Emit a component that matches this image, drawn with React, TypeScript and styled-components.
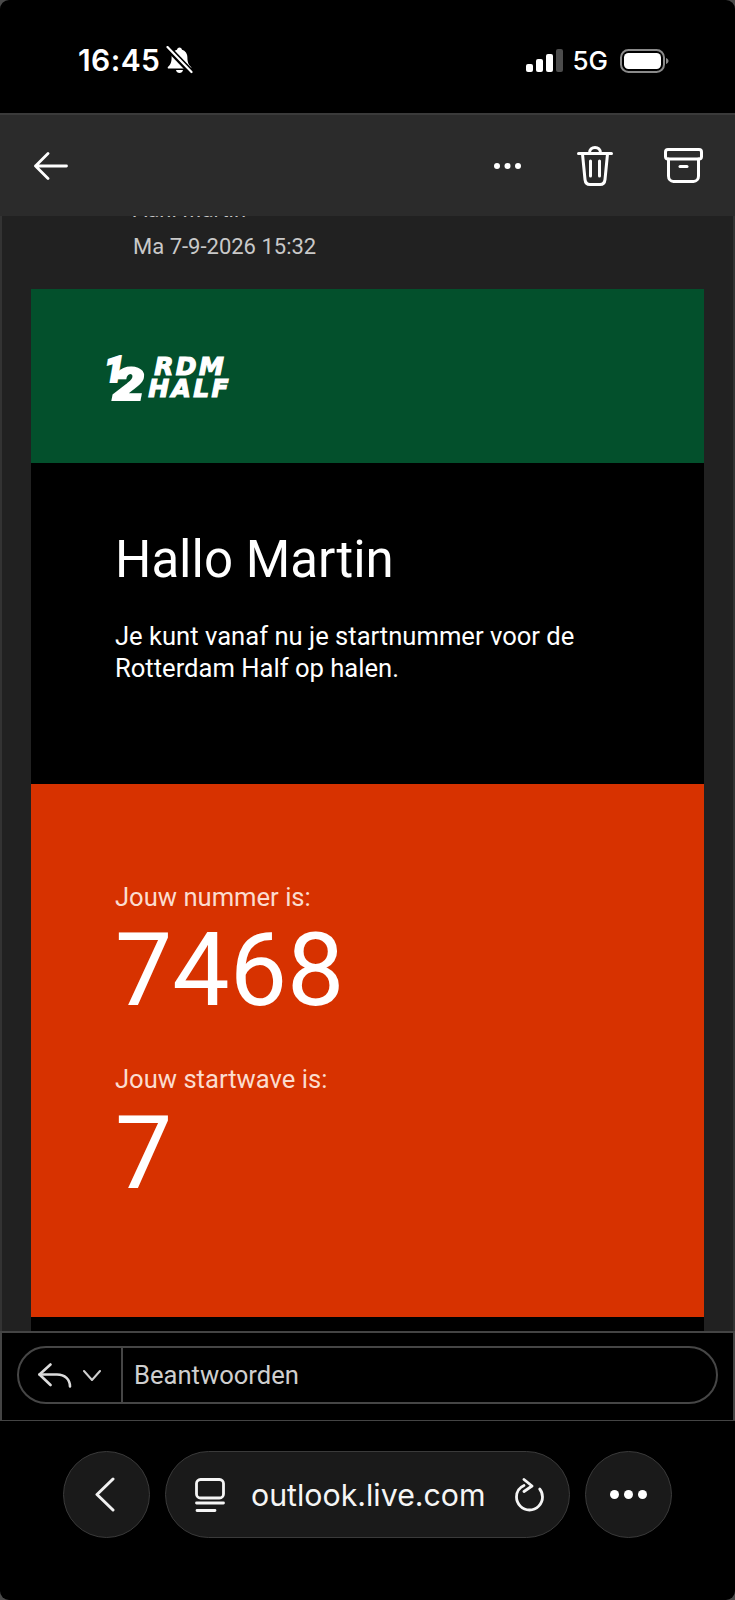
import React from 'react';
import styled, { createGlobalStyle } from 'styled-components';

const GlobalStyle = createGlobalStyle`
  html, body {
    margin: 0;
    padding: 0;
    background: #4a4a4a;
  }
  * { box-sizing: border-box; }
`;

const Phone = styled.div`
  width: 735px;
  height: 1600px;
  display: flex;
  flex-direction: column;
  background: #000;
  border-radius: 9px;
  overflow: hidden;
  font-family: Roboto, "Liberation Sans", sans-serif;
`;

const StatusBar = styled.div`
  height: 113px;
  flex: none;
  display: flex;
  align-items: flex-start;
  justify-content: space-between;
  padding: 44px 66px 0 78px;
  color: #fff;
  font-family: Inter, "Liberation Sans", sans-serif;
`;

const StatusGroup = styled.div`
  display: flex;
  align-items: center;
  height: 32px;
`;

const Clock = styled.span`
  font-size: 30px;
  font-weight: 600;
  letter-spacing: 0.4px;
  margin-right: 6px;
`;

const Network = styled.span`
  font-size: 26px;
  font-weight: 500;
  margin: 0 12px 0 9px;
`;

const SignalBars = styled.div`
  display: flex;
  align-items: flex-end;
  gap: 3px;
  height: 23px;
`;

const SignalBar = styled.span<{ $height: number; $dim?: boolean }>`
  width: 7px;
  height: ${p => p.$height}px;
  border-radius: 2px;
  background: ${p => (p.$dim ? '#4c4c4c' : '#fff')};
`;

const Toolbar = styled.div`
  height: 103px;
  flex: none;
  display: flex;
  align-items: center;
  background: #2b2b2b;
  border-top: 2px solid #3a3a3a;
  padding: 0 32px 0 34px;
  position: relative;
  z-index: 1;
`;

const ToolbarActions = styled.div`
  margin-left: auto;
  display: flex;
  align-items: center;
  gap: 51px;
`;

const MoreSlot = styled.div`
  margin-right: 5px;
  display: flex;
`;

const Scroller = styled.div`
  flex: 1;
  min-height: 0;
  overflow: hidden;
  background: #212121;
  border-left: 2px solid #333;
  border-right: 2px solid #333;
`;

const ScrollInner = styled.div`
  margin-top: -23px;
  padding: 0 29px;
`;

const MetaLine = styled.div<{ $gap?: number }>`
  height: 34px;
  line-height: 34px;
  margin-top: ${p => p.$gap ?? 0}px;
  padding-left: 102px;
  font-size: 22px;
  color: #c9c9c9;
`;

const Hero = styled.div`
  height: 174px;
  margin-top: 25px;
  background: #03502c;
  padding: 64px 0 0 73px;
`;

const Logo = styled.div`
  display: flex;
  align-items: flex-start;
  color: #fff;
  font-weight: 900;
  font-style: italic;
  -webkit-text-stroke: 1.2px #fff;
`;

const LogoDigit = styled.span<{ $size: number; $drop: number; $overlap?: number; $stretch?: number }>`
  font-family: Roboto, sans-serif;
  font-size: ${p => p.$size}px;
  line-height: ${p => p.$size}px;
  margin-top: ${p => p.$drop}px;
  margin-left: ${p => p.$overlap ?? 0}px;
  margin-right: ${p => ((p.$stretch ?? 1) - 1) * 25}px;
  transform: scaleX(${p => p.$stretch ?? 1});
  transform-origin: left center;
  -webkit-text-stroke: 2px #fff;
`;

const LogoWords = styled.div`
  display: flex;
  flex-direction: column;
  margin: 3px 0 0 4px;
  font-family: "DejaVu Sans", sans-serif;
  font-weight: 700;
  font-size: 25px;
  line-height: 21.5px;
  letter-spacing: 2.4px;
`;

const LogoWord = styled.span<{ $indent: number }>`
  margin-left: ${p => p.$indent}px;
`;

const Greeting = styled.div`
  height: 321px;
  background: #000;
  color: #fff;
  padding: 67px 30px 0 84px;
`;

const Title = styled.h1`
  margin: 0;
  font-size: 51px;
  font-weight: 400;
  line-height: 60px;
`;

const Body = styled.p`
  margin: 30px 0 0;
  font-size: 25.6px;
  line-height: 32px;
`;

const NumberPanel = styled.div`
  height: 533px;
  background: #d73200;
  color: #fff;
  padding: 98px 30px 0 84px;
`;

const NumberLabel = styled.div<{ $gap?: number }>`
  font-size: 25.6px;
  line-height: 30px;
  color: #fbdccf;
  margin-top: ${p => p.$gap ?? 0}px;
`;

const BigNumber = styled.div<{ $lift: number }>`
  font-size: 102px;
  line-height: 122px;
  font-weight: 400;
  margin-top: ${p => -p.$lift}px;
`;

const EmailTail = styled.div`
  height: 40px;
  background: #000;
`;

const ReplyBar = styled.div`
  height: 90px;
  flex: none;
  background: #000;
  border: 2px solid #444;
  border-bottom-width: 1px;
  padding: 13px 15px;
  position: relative;
`;

const ReplyPill = styled.div`
  height: 58px;
  display: flex;
  align-items: stretch;
  border: 2px solid #464646;
  border-radius: 29px;
`;

const ReplyToggle = styled.div`
  width: 104px;
  flex: none;
  display: flex;
  align-items: center;
  gap: 11px;
  padding-left: 19px;
  border-right: 2px solid #464646;
`;

const ReplyText = styled.div`
  display: flex;
  align-items: center;
  padding-left: 11px;
  font-size: 25.6px;
  color: #cfcfcf;
`;

const BrowserBar = styled.div`
  height: 179px;
  flex: none;
  display: flex;
  align-items: flex-start;
  gap: 15px;
  padding: 30px 0 0 63px;
`;

const RoundButton = styled.div`
  width: 87px;
  height: 87px;
  flex: none;
  border-radius: 50%;
  background: #1a1a1a;
  border: 1px solid #3a3a3a;
  display: flex;
  align-items: center;
  justify-content: center;
`;

const UrlPill = styled.div`
  width: 405px;
  height: 87px;
  flex: none;
  display: flex;
  align-items: center;
  border-radius: 44px;
  background: #1a1a1a;
  border: 1px solid #3a3a3a;
  padding: 0 25px 0 29px;
`;

const UrlText = styled.span`
  margin-left: 26px;
  font-family: Inter, "Liberation Sans", sans-serif;
  font-size: 30.3px;
  font-weight: 400;
  color: #f5f5f5;
  flex: 1;
  white-space: nowrap;
`;

const MutedBell = () => (
  <svg width="27" height="28" viewBox="0 0 27 28">
    <path d="M13.5 1.5c-1.4 0-2.4 1-2.5 2.3C7.6 4.8 5.6 7.8 5.6 11.5c0 5-1.2 7.3-3.6 9.4-.7.6-.3 1.7.7 1.7h21.6c1 0 1.4-1.1.7-1.7-2.4-2.1-3.6-4.4-3.6-9.4 0-3.7-2-6.7-5.4-7.7-.1-1.3-1.1-2.3-2.5-2.3z" fill="#fff" />
    <path d="M10 24h7c-.3 1.8-1.8 3-3.5 3S10.300 25.800 10 24z" fill="#fff" />
    <path d="M2 2l23 24" stroke="#000" strokeWidth="6" />
    <path d="M1.500 1l24 25" stroke="#fff" strokeWidth="2.200" strokeLinecap="round" />
  </svg>
);

const Battery = () => (
  <svg width="49" height="24" viewBox="0 0 49 24" style={{ marginTop: 1 }}>
    <rect x="1" y="1" width="43" height="22" rx="7.500" fill="none" stroke="#8a8a8a" strokeWidth="2" />
    <rect x="4" y="4" width="37" height="16" rx="4.500" fill="#fff" />
    <path d="M46 9c1.500.5 2.500 1.600 2.500 3s-1 2.500-2.500 3z" fill="#8a8a8a" />
  </svg>
);

const BackArrow = () => (
  <svg width="34" height="28" viewBox="0 0 34 28" fill="none" stroke="#fff" strokeWidth="2.800" strokeLinecap="round" strokeLinejoin="round">
    <path d="M14 1.500L1.500 14 14 26.500M1.500 14H32.500" />
  </svg>
);

const Dots = ({ size, width }: { size: number; width: number }) => (
  <svg width={width} height={size * 2} viewBox={`0 0 ${width} ${size * 2}`} fill="#fff">
    <circle cx={size} cy={size} r={size} />
    <circle cx={width / 2} cy={size} r={size} />
    <circle cx={width - size} cy={size} r={size} />
  </svg>
);

const TrashIcon = () => (
  <svg width="36" height="40" viewBox="0 0 36 40" fill="none" stroke="#fff" strokeWidth="3" strokeLinecap="round" strokeLinejoin="round">
    <path d="M1.500 7.500H34.500" />
    <path d="M12.500 7C12.500 3.500 15 1.500 18 1.500S23.500 3.500 23.500 7" />
    <path d="M5.500 8l2.500 25.500c.3 3 2.300 5 5 5h10c2.700 0 4.700-2 5-5L30.500 8" />
    <path d="M13.500 15V30M22.500 15V30" />
  </svg>
);

const ArchiveIcon = () => (
  <svg width="39" height="35" viewBox="0 0 39 35" fill="none" stroke="#fff" strokeWidth="3" strokeLinecap="round" strokeLinejoin="round">
    <rect x="1.500" y="1.500" width="36" height="9.500" rx="2.500" />
    <path d="M4.500 11V28c0 3 2 5.500 5 5.500h20c3 0 5-2.500 5-5.500V11" />
    <path d="M16 18.500h7" />
  </svg>
);

const ReplyIcon = () => (
  <svg width="34" height="25" viewBox="0 0 34 25" fill="none" stroke="#dcdcdc" strokeWidth="2.600" strokeLinecap="round" strokeLinejoin="round">
    <path d="M12.500 1.500L1.500 11.500 12.500 22" />
    <path d="M1.500 11.500H19c8 0 13 5 13 12" />
  </svg>
);

const ChevronDown = () => (
  <svg width="18" height="11" viewBox="0 0 18 11" fill="none" stroke="#cfcfcf" strokeWidth="2" strokeLinecap="round" strokeLinejoin="round">
    <path d="M1 1l8 9 8-9" />
  </svg>
);

const ChevronLeft = () => (
  <svg width="20" height="35" viewBox="0 0 20 35" fill="none" stroke="#f0f0f0" strokeWidth="3" strokeLinecap="round" strokeLinejoin="round" style={{ marginRight: 4 }}>
    <path d="M18 2L2 17.500 18 33" />
  </svg>
);

const SiteIcon = () => (
  <svg width="30" height="34" viewBox="0 0 30 34" fill="none" stroke="#f5f5f5" strokeWidth="2.800" strokeLinecap="round" strokeLinejoin="round">
    <rect x="1.500" y="1.500" width="27" height="18.500" rx="4" />
    <path d="M1.500 25H28.500M2 32.500H20" />
  </svg>
);

const ReloadIcon = () => (
  <svg width="29" height="34" viewBox="0 0 29 34" fill="none" stroke="#f5f5f5" strokeWidth="2.800" strokeLinecap="round" strokeLinejoin="round">
    <path d="M9 7.500C4.500 9.500 1.500 14 1.500 19c0 7 5.800 13 13 13s13-6 13-13c0-3-1-5.800-2.800-8" />
    <path d="M9 1.500l8 6.500-8 5.500" />
  </svg>
);

const App: React.FC = () => (
  <Phone>
    <GlobalStyle />
    <StatusBar>
      <StatusGroup>
        <Clock>16:45</Clock>
        <MutedBell />
      </StatusGroup>
      <StatusGroup>
        <SignalBars>
          <SignalBar $height={8} />
          <SignalBar $height={13} />
          <SignalBar $height={18} />
          <SignalBar $height={23} $dim />
        </SignalBars>
        <Network>5G</Network>
        <Battery />
      </StatusGroup>
    </StatusBar>

    <Toolbar>
      <BackArrow />
      <ToolbarActions>
        <MoreSlot>
          <Dots size={3} width={27} />
        </MoreSlot>
        <TrashIcon />
        <ArchiveIcon />
      </ToolbarActions>
    </Toolbar>

    <Scroller>
      <ScrollInner>
        <MetaLine>Aan: Martin</MetaLine>
        <MetaLine $gap={3}>Ma 7-9-2026 15:32</MetaLine>
        <Hero>
          <Logo>
            <LogoDigit $size={36} $drop={-1}>1</LogoDigit>
            <LogoDigit $size={44} $drop={10} $overlap={-11} $stretch={1.25}>2</LogoDigit>
            <LogoWords>
              <LogoWord $indent={6}>RDM</LogoWord>
              <LogoWord $indent={0}>HALF</LogoWord>
            </LogoWords>
          </Logo>
        </Hero>
        <Greeting>
          <Title>Hallo Martin</Title>
          <Body>
            Je kunt vanaf nu je startnummer voor de
            <br />
            Rotterdam Half op halen.
          </Body>
        </Greeting>
        <NumberPanel>
          <NumberLabel>Jouw nummer is:</NumberLabel>
          <BigNumber $lift={3}>7468</BigNumber>
          <NumberLabel $gap={33}>Jouw startwave is:</NumberLabel>
          <BigNumber $lift={2}>7</BigNumber>
        </NumberPanel>
        <EmailTail />
      </ScrollInner>
    </Scroller>

    <ReplyBar>
      <ReplyPill>
        <ReplyToggle>
          <ReplyIcon />
          <ChevronDown />
        </ReplyToggle>
        <ReplyText>Beantwoorden</ReplyText>
      </ReplyPill>
    </ReplyBar>

    <BrowserBar>
      <RoundButton>
        <ChevronLeft />
      </RoundButton>
      <UrlPill>
        <SiteIcon />
        <UrlText>outlook.live.com</UrlText>
        <ReloadIcon />
      </UrlPill>
      <RoundButton>
        <Dots size={4.5} width={37} />
      </RoundButton>
    </BrowserBar>
  </Phone>
);

export default App;
